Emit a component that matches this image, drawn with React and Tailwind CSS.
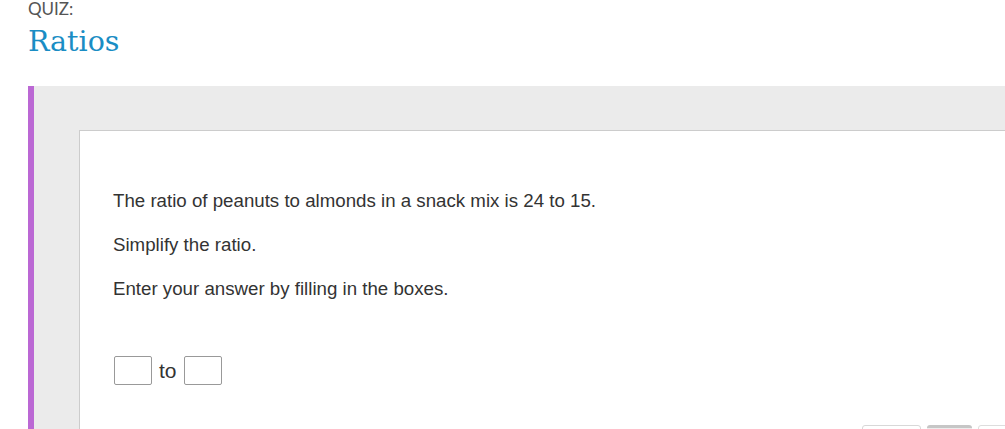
import React from "react";

const QuizPage = () => {
  return (
    <div className="w-[1005px] h-[429px] overflow-hidden bg-white">
      <div className="pl-[28px]">
        <div
          className="text-[17px] leading-[17px] text-[#555]"
          style={{ fontFamily: "Lato, 'Open Sans', sans-serif" }}
        >
          QUIZ:
        </div>
        <h1
          className="text-[28.5px] leading-[40px] text-[#1a8dc4] mt-[5px]"
          style={{ fontFamily: "'DejaVu Serif', serif" }}
        >
          Ratios
        </h1>
      </div>

      <div className="ml-[28px] mt-[24px] border-l-[6px] border-[#bb68d4] bg-[#ebebeb] pt-[44px] pl-[45px] h-[400px]">
        <div
          className="w-[960px] bg-white border border-[#cccccc] pl-[33px] pt-[59px] text-[#333]"
          style={{ fontFamily: "'Liberation Sans', Arial, sans-serif" }}
        >
          <p className="text-[18.7px] leading-[22px]">
            The ratio of peanuts to almonds in a snack mix is 24 to 15.
          </p>
          <p className="text-[18.7px] leading-[22px] mt-[22px]">Simplify the ratio.</p>
          <p className="text-[18.7px] leading-[22px] mt-[22px]">
            Enter your answer by filling in the boxes.
          </p>

          <div className="flex items-center gap-[7px] mt-[56px] ml-[1px]">
            <div className="w-[38px] h-[29px] border border-[#999] rounded-[2px]" />
            <span className="text-[21px] leading-[29px]">to</span>
            <div className="w-[38px] h-[29px] border border-[#999] rounded-[2px]" />
          </div>

          <div className="flex gap-[6px] mt-[40px] ml-[749px]">
            <div className="w-[59px] h-[30px] border border-[#d8d8d8] rounded-t-[3px] bg-white" />
            <div className="w-[45px] h-[30px] border-t-[3px] border-[#c6c6c6] rounded-t-[3px] bg-[#ececec]" />
            <div className="w-[60px] h-[30px] border border-[#dddddd] rounded-t-[3px] bg-white" />
          </div>
        </div>
      </div>
    </div>
  );
};

export default function App() {
  return <QuizPage />;
}
